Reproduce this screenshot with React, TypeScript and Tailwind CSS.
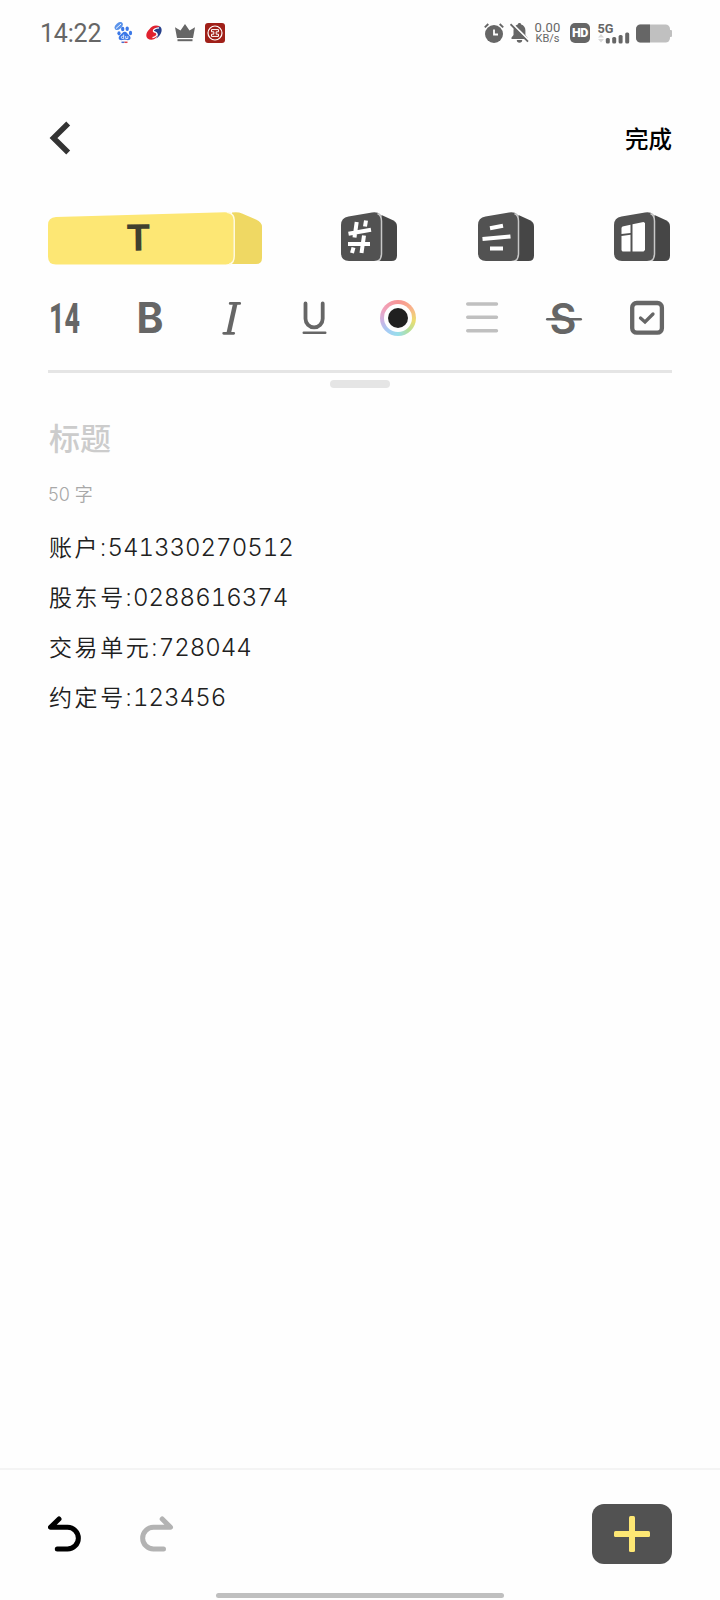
import type { ReactNode } from "react";

const fields = [
  { label: "账户", value: "541330270512" },
  { label: "股东号", value: "0288616374" },
  { label: "交易单元", value: "728044" },
  { label: "约定号", value: "123456" },
];

function StatusBar() {
  return (
    <div className="flex h-[66px] items-center justify-between pl-10 pr-12 text-[#666]">
      <div className="flex items-center">
        <span className="w-[74px] font-['Roboto'] text-[25px] leading-none tracking-[-0.2px]">
          14:22
        </span>
        <svg width="20" height="22" viewBox="0 0 20 22" fill="#3b78e7">
          <ellipse cx="4.700" cy="4" rx="4.800" ry="2.900" transform="rotate(-42 4.700 4)" fill="#5b93ea" />
          <path d="m2 6.500 5-4.500" stroke="#fff" strokeWidth="0.9" />
          <ellipse cx="8.700" cy="7" rx="1.700" ry="2.300" />
          <ellipse cx="13.200" cy="6.700" rx="1.700" ry="2.300" />
          <ellipse cx="5" cy="11.300" rx="1.600" ry="2.100" />
          <ellipse cx="16.500" cy="11" rx="1.600" ry="2.200" />
          <path d="M10.800 9.800c2 0 2.600 2 4 3.200 3 2.400 1.800 5.200-.8 5.200-1.600 0-2-.4-3.400-.4s-1.800.4-3.300.4c-2.700 0-3.700-3-1-5.200 1.600-1.200 2.300-3.200 4.500-3.200z" />
          <path
            d="M9.700 12.500v4H8.500a1 1 0 0 1 0-2.300h1.200M11.700 14v2.500h2.200V14"
            fill="none"
            stroke="#fff"
            strokeWidth="0.8"
          />
          <path d="M7.500 20.300h3" stroke="#4a6fd0" strokeWidth="1.500" />
          <path d="M10.500 20.300h3" stroke="#e0464a" strokeWidth="1.500" />
        </svg>
        <svg className="ml-3" width="16" height="16" viewBox="0 0 16 16">
          <path
            d="M14 1.500C10-.8 5.500.8 3.400 4.200 0 7-.6 11.500 1.600 13.500c3 2.300 7.400 1.200 9.200-1.800 1-2-.2-3.700-2.800-4.300-1.700-.5-1.500-2 .2-3.200C10 3 12 2.200 14 1.500z"
            fill="#e0222f"
          />
          <path
            d="M14 1.500c2.300 1.500 2 5.200.2 8-1 1.700-2.400 3-4 3.900 1.700-2.300 2.300-4.400.3-5.600-1.800-.9-3-1-2.800-2C8 4 11 2 14 1.500z"
            fill="#27408b"
          />
          <path
            d="M13 2.800C9.500 3 7 4.600 7.400 5.800c.3 1.200 3.600.9 3.600 3.300 0 1.700-2 3-4.500 3.600"
            fill="none"
            stroke="#fff"
            strokeWidth="1.200"
          />
        </svg>
        <svg className="ml-3" width="22" height="18" viewBox="0 0 22 18" fill="#666">
          <path d="M1 3.200 6.500 6.500 11 0l4.500 6.500 5.500-3.300L19 14H3z" />
          <path d="M3.500 15.200h15v2h-15z" />
        </svg>
        <svg className="ml-[9px]" width="20" height="20" viewBox="0 0 20 20">
          <rect width="20" height="20" rx="3" fill="#a02019" />
          <g fill="none" stroke="#fff">
            <circle cx="10" cy="10" r="7" strokeWidth="1.200" />
            <path d="M6.500 6.600h7v2.200h-2.300v2.400h2.300v2.200h-7v-2.200h2.300V8.800H6.500z" strokeWidth="1" />
          </g>
        </svg>
      </div>

      <div className="flex items-center">
        <svg width="20" height="20" viewBox="0 0 20 20">
          <circle cx="10" cy="11" r="9" fill="#666" />
          <path d="M.8 4.400 4.300 1M19.200 4.400 15.700 1" stroke="#666" strokeWidth="1.900" />
          <path d="M10 6.500v5h4" fill="none" stroke="#fff" strokeWidth="1.800" />
        </svg>
        <svg className="ml-1.5" width="19" height="20" viewBox="0 0 19 20">
          <path
            d="M9.500 0c1 0 1.700.7 1.700 1.600 2.600.8 4.200 3 4.200 5.600V12l2.100 2.600V16h-16v-1.400L3.500 12V7.200c0-2.600 1.600-4.800 4.300-5.600C7.800.7 8.500 0 9.500 0zM6.800 17h5.400a2.700 2.700 0 0 1-5.400 0z"
            fill="#666"
          />
          <path d="M1.600.2 19 17.300" stroke="#fff" strokeWidth="2" />
          <path d="M.5 1.200 18 18.600" stroke="#666" strokeWidth="1.800" />
        </svg>
        <div className="ml-[5px] flex w-[27px] flex-col items-center font-['Roboto']">
          <span className="text-[13px] leading-[11px] tracking-[0.2px]">0.00</span>
          <span className="text-[11px] leading-[11px]">KB/s</span>
        </div>
        <div className="ml-[9px] flex size-5 items-center justify-center rounded-[5px] bg-[#666] font-['Roboto'] text-[12.5px] leading-none font-black tracking-[-0.4px] text-white">
          HD
        </div>
        <svg className="ml-2 overflow-visible" width="32" height="21" viewBox="0 0 32 21" fill="#666">
          <text
            x="-0.500"
            y="9.700"
            fontFamily="Roboto, sans-serif"
            fontWeight="700"
            fontSize="13.500"
            textLength="16"
            lengthAdjust="spacingAndGlyphs"
          >
            5G
          </text>
          <path d="m0 14.500 3-3.500 3 3.500zM0 16l3 3.500L6 16z" fill="#d8d8d8" />
          <rect x="7.800" y="15" width="4" height="5.500" rx="1.500" />
          <rect x="14.200" y="14" width="4" height="6.500" rx="1.500" />
          <rect x="20.600" y="12" width="4" height="8.500" rx="1.500" />
          <rect x="27.200" y="9.500" width="4" height="11" rx="1.500" />
        </svg>
        <svg className="ml-[5px]" width="37" height="19" viewBox="0 0 37 19">
          <rect x="1" y=".5" width="34" height="18" rx="4.500" fill="#c0c0c0" />
          <rect x="34" y="6" width="3" height="7" rx="1" fill="#c0c0c0" />
          <path d="M5.500.5H15v18H5.500A4.500 4.500 0 0 1 1 14V5A4.500 4.500 0 0 1 5.500.5z" fill="#666" />
        </svg>
      </div>
    </div>
  );
}

function TabCube({ children }: { children: ReactNode }) {
  return (
    <svg width="57" height="50" viewBox="0 0 57 50">
      <path
        d="M40.500 3 52 8.200q4 2 4 6V43.500q0 5.500-5.500 5.500H38z"
        fill="#464646"
      />
      <path
        d="M7.500 4.500 31 .4Q41 -1 41 8.500V41q0 8-8 8H8q-8 0-8-8V13Q0 5.800 7.500 4.500z"
        fill="#525252"
      />
      <path d="M36.500 1.500q4 2 4 7.500V41.500q0 5-3 7.500" fill="none" stroke="#c8c8c8" strokeWidth="1.500" />
      {children}
    </svg>
  );
}

function Tabs() {
  return (
    <div className="flex h-[53px] justify-between pr-[1px]">
      <svg width="214" height="53" viewBox="0 0 214 53">
        <path d="M184 .5q6-1 10 1l14 6q6 2.500 6 7.500V46q0 6-6 6h-24z" fill="#efd863" />
        <path
          d="M8 5 177 .3q8.500 0 8.500 8V44q0 8.500-8 8.500H8q-8 0-8-8V13q0-7.500 8-8z"
          fill="#fde774"
        />
        <path
          d="M179 .3q7.200.7 7.200 8V44q0 7-5 8.500"
          fill="none"
          stroke="#fffbe2"
          strokeWidth="1.500"
        />
        <text
          x="78"
          y="38.600"
          transform="rotate(-0.600 90 30)"
          fontFamily="Inter, sans-serif"
          fontWeight="700"
          fontSize="36"
          fill="#40402f"
          textLength="25"
          lengthAdjust="spacingAndGlyphs"
        >
          T
        </text>
      </svg>
      <div className="flex gap-[79.5px]">
        <TabCube>
          <path
            d="M7.500 21.700 30 17.700M7 32h22M15.700 10 13.500 25.500M25 8.500l-1 6M12.500 35.500l-1.500 5.500M23 23.500 20.500 41"
            fill="none"
            stroke="#fff"
            strokeWidth="4"
          />
        </TabCube>
        <TabCube>
          <path
            d="m12 16.300 13-2.500M4.500 27l28-2.600M12 36.500h13"
            fill="none"
            stroke="#fff"
            strokeWidth="4"
          />
        </TabCube>
        <TabCube>
          <g fill="#fff">
            <path d="m8.500 14.500 8-1.800v8.200l-9 1.200v-6.300zM7.500 24l9-1.200v16.700h-8l-1-1.200z" />
            <path d="m18.500 12.300 11-2.300 1.500 1v27l-1.500 1.500h-11z" />
          </g>
        </TabCube>
      </div>
    </div>
  );
}

function Tool({ children }: { children: ReactNode }) {
  return (
    <svg
      className="overflow-visible"
      width="36"
      height="36"
      viewBox="0 0 36 36"
      fill="none"
      stroke="#666"
      strokeLinecap="round"
    >
      {children}
    </svg>
  );
}

function Toolbar() {
  return (
    <div className="flex justify-between pr-[7px]">
      <Tool>
        <text
          x="1"
          y="33"
          fontFamily="Roboto, sans-serif"
          fontWeight="800"
          fontSize="42.500"
          fill="#666"
          stroke="none"
          textLength="31"
          lengthAdjust="spacingAndGlyphs"
        >
          14
        </text>
      </Tool>
      <Tool>
        <text
          x="5.500"
          y="33.300"
          fontFamily="Inter, sans-serif"
          fontWeight="700"
          fontSize="42"
          fill="#666"
          stroke="none"
          textLength="27"
          lengthAdjust="spacingAndGlyphs"
        >
          B
        </text>
      </Tool>
      <Tool>
        <path d="M16.200 3.400h9.500M9.700 33.300h10" strokeWidth="2.800" />
        <path d="M21.300 3.400 14.700 33.300" strokeWidth="4.500" strokeLinecap="butt" />
      </Tool>
      <Tool>
        <path d="M8.500 3.500v15.300a8.600 8.600 0 0 0 17.200 0V3.500" strokeWidth="3.800" />
        <path d="M6.700 32.700h21.600" strokeWidth="2.400" />
      </Tool>
      <div className="flex size-9 items-center justify-center rounded-full bg-[conic-gradient(#f79494,#f9b08c_50deg,#ecdd70_100deg,#b5e09c_140deg,#97deea_180deg,#a6cbf5_220deg,#cdb3e4_260deg,#f0a2bd_300deg,#f79494)]">
        <div className="flex size-7 items-center justify-center rounded-full bg-[#fefefe]">
          <div className="size-5 rounded-full bg-[#202020]" />
        </div>
      </div>
      <Tool>
        <path d="M4.700 4h28.800M4.700 17.300h28.800M4.700 30.700h28.800" stroke="#c0c0c0" strokeWidth="3.400" />
      </Tool>
      <Tool>
        <text
          x="3.600"
          y="33.500"
          fontFamily="Inter, sans-serif"
          fontWeight="600"
          fontSize="42"
          fill="#666"
          stroke="none"
          textLength="27"
          lengthAdjust="spacingAndGlyphs"
        >
          S
        </text>
        <path d="M1.300 19.300h33.400" strokeWidth="2.600" />
      </Tool>
      <Tool>
        <rect x="3.200" y="3" width="29.700" height="29.700" rx="4.500" strokeWidth="4.300" />
        <path d="m11.500 18 4.500 4 8-8" strokeWidth="3.300" />
      </Tool>
    </div>
  );
}

function Note() {
  return (
    <div className="flex-1 px-12 font-['Noto_Sans','Noto_Sans_CJK_SC',sans-serif]">
      <div className="mt-[27px] h-[46px] pl-px text-[31px] leading-[46px] font-medium text-[#ccc]">
        标题
      </div>
      <div className="mt-[22px] h-6 font-['Inter','Noto_Sans_CJK_SC',sans-serif] text-[18px] leading-6 font-[350] text-[#a8a8a8]">
        50 字
      </div>
      <div className="mt-[15px] pl-[1px] text-[23px] leading-[50px] font-[350] text-[#202020]">
        {fields.map(({ label, value }) => (
          <p key={label} className="flex h-[50px] items-baseline">
            <span className="tracking-[2.6px]">{label}:</span>
            <span className="-ml-px font-['Inter'] text-[24px] font-light tabular-nums">
              {value}
            </span>
          </p>
        ))}
      </div>
    </div>
  );
}

function BottomBar() {
  return (
    <div className="flex h-[132px] flex-col items-center border-t-2 border-[#f4f4f4]">
      <div className="flex w-full justify-between px-12 pt-[34px]">
        <div className="flex gap-[57.5px] pt-3">
          <svg width="34" height="36" viewBox="0 0 34 36" fill="none" stroke="#000">
            <path
              d="M11 3 2.500 11.300h17a10.800 10.800 0 0 1 0 21.700H9.300"
              strokeWidth="5"
              strokeLinecap="round"
              strokeLinejoin="round"
            />
          </svg>
          <svg width="34" height="36" viewBox="0 0 34 36" fill="none" stroke="#b3b3b3">
            <path
              d="M22.200 3 30.500 11.300h-17a10.800 10.800 0 0 0 0 21.700h10"
              strokeWidth="5"
              strokeLinecap="round"
              strokeLinejoin="round"
            />
          </svg>
        </div>
        <button className="flex h-[60px] w-20 items-center justify-center rounded-xl bg-[#525252]">
          <svg width="36" height="36" viewBox="0 0 36 36" fill="#fde774">
            <rect x="15" width="6" height="36" rx="1.500" />
            <rect y="15" width="36" height="6" rx="1.500" />
          </svg>
        </button>
      </div>
      <div className="mt-[29px] h-[5px] w-72 rounded-full bg-[#bfbfbf]" />
    </div>
  );
}

export default function App() {
  return (
    <div className="flex h-[1600px] w-full flex-col bg-[#fefefe]">
      <StatusBar />
      <div className="flex h-[146px] items-center justify-between px-12">
        <svg className="mb-0.5" width="24" height="34" viewBox="0 0 24 34" fill="none">
          <path d="M20.200 2.500 5.500 17l14.700 14.500" stroke="#333" strokeWidth="5.500" />
        </svg>
        <span className="font-['Noto_Sans_CJK_SC',sans-serif] text-[23.5px] leading-none font-medium text-black">
          完成
        </span>
      </div>
      <div className="px-12">
        <Tabs />
        <div className="h-[35px]" />
        <Toolbar />
        <div className="mt-[34px] h-[3px] bg-[#e5e5e5]" />
      </div>
      <div className="mt-[7px] ml-[330px] h-2 w-[60px] rounded-full bg-[#e5e5e5]" />
      <Note />
      <BottomBar />
    </div>
  );
}
